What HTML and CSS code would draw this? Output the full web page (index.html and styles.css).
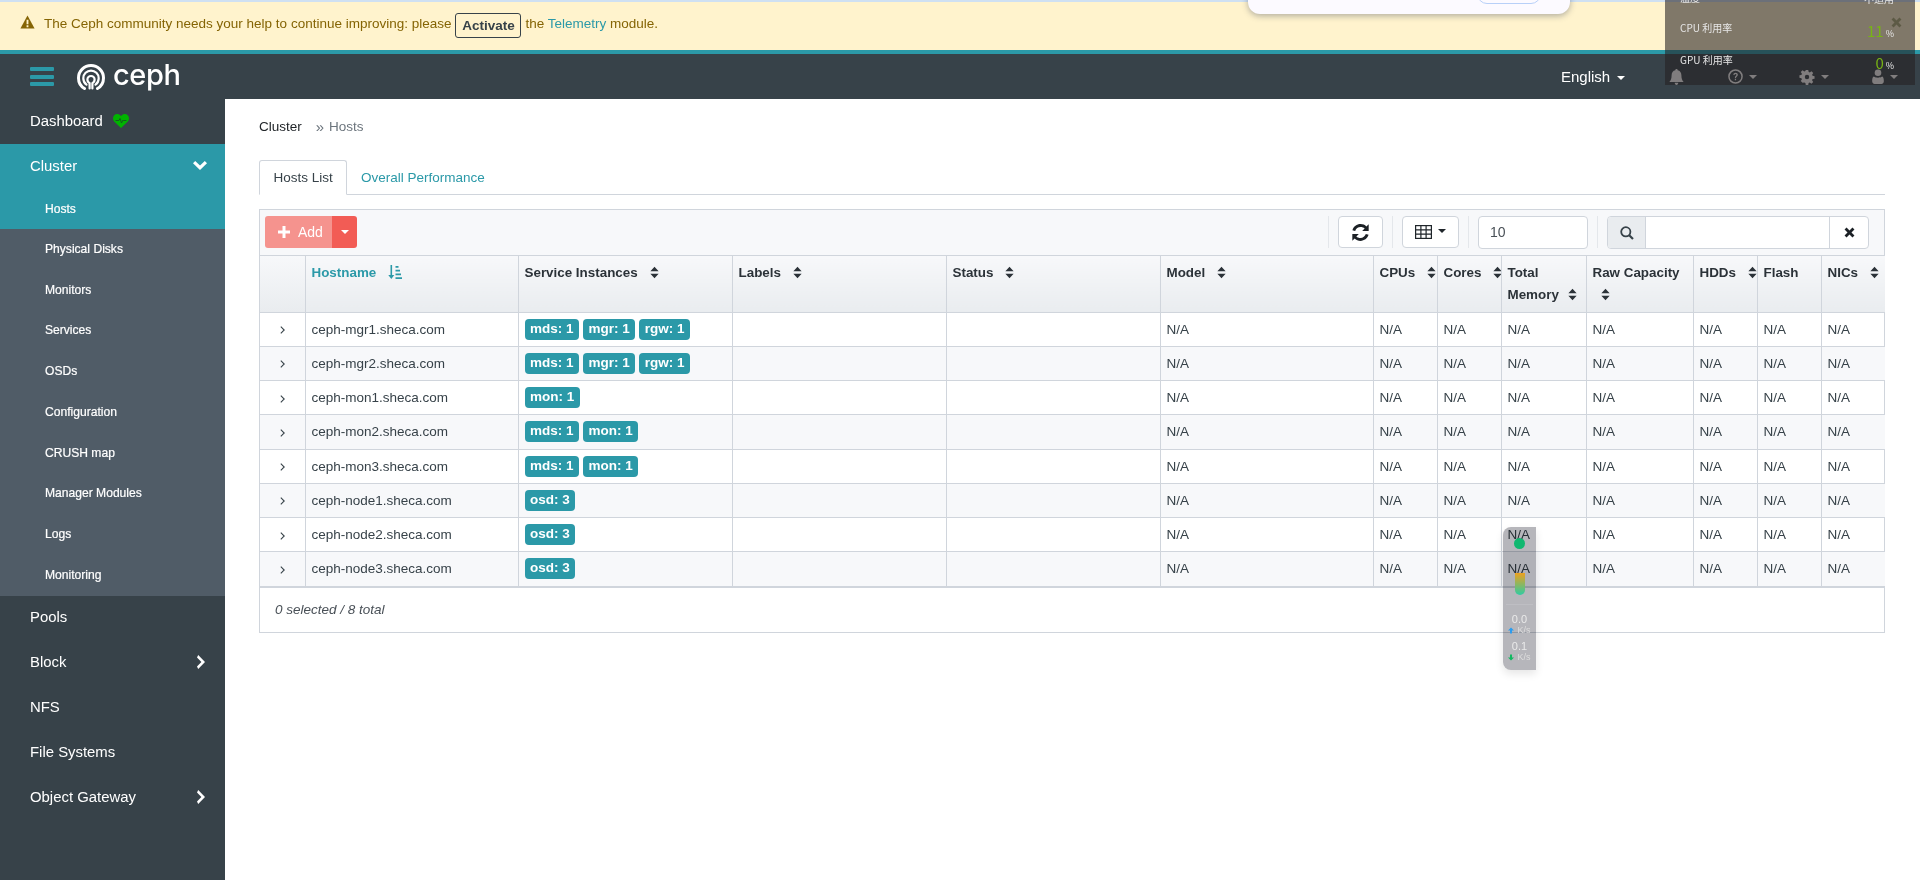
FILE: index.html
```html
<!DOCTYPE html>
<html lang="en">
<head>
<meta charset="utf-8">
<title>Ceph Hosts</title>
<link rel="stylesheet" href="styles.css">
</head>
<body>
<svg class="defs" width="0" height="0">
  <symbol id="sort" viewBox="0 0 10 14"><path d="M5 0.5 9.6 5.6H0.4zM5 13.5 0.4 8.4H9.6z"/></symbol>
  <symbol id="chev" viewBox="0 0 8 14"><path d="M1.2 0 8 7 1.2 14 0 11.6 4.4 7 0 2.4z"/></symbol>
  <symbol id="exp" viewBox="0 0 5 8"><path d="M.8.6 4.200 4 .8 7.400" fill="none" stroke="#374249" stroke-width="1.100"/></symbol>
</svg>
<div class="page">
  <div class="banner">
    <svg class="warn" viewBox="0 0 16 15"><path d="M8 0.5 15.6 14.5H0.4z" fill="#856404"/><path d="M7 5h2v5H7zM7 11h2v2H7z" fill="#fff3cd"/></svg>
    <span>The Ceph community needs your help to continue improving: please</span>
    <button class="activate">Activate</button>
    <span>the <a class="link">Telemetry</a> module.</span>
  </div>
  <header class="navbar">
    <div class="burger"><i></i><i></i><i></i></div>
    <svg class="logo" viewBox="0 0 28 26" fill="none" stroke="#fff" stroke-linecap="round">
      <path d="M7.500 24.500C3.800 22.400 1.500 18.500 1.500 14 1.500 7 7.200 1.500 14 1.500S26.500 7 26.500 14c0 4.500-2.300 8.400-6 10.500" stroke-width="3"/>
      <path d="M9.500 20.600C7.500 19.200 6.300 16.800 6.300 14.200 6.300 10 9.800 6.600 14 6.600s7.700 3.400 7.700 7.600c0 2.600-1.200 5-3.200 6.400" stroke-width="2.200"/>
      <path d="M12.600 24.500V19.200C11.200 18.600 10.400 17.200 10.400 15.600 10.400 13.600 12 12 14 12s3.600 1.600 3.600 3.600c0 1.600-.8 3-2.200 3.600v5.300" stroke-width="2.200"/>
    </svg>
    <span class="brand">ceph</span>
    <div class="nav-right">
      <span class="lang">English <i class="caret"></i></span>
      <svg class="nav-icon bell" viewBox="0 0 16 18"><path d="M8 0c1 0 1.400.7 1.300 1.500C12 2 13.500 4.300 13.500 7c0 4 .9 5.700 2.500 7.500H0C1.600 12.700 2.500 11 2.500 7c0-2.700 1.500-5 4.200-5.500C6.600.7 7 0 8 0zM6 15.500h4c0 1.400-.9 2.500-2 2.500s-2-1.100-2-2.500z"/></svg>
      <span class="nav-item help"><svg class="nav-icon" viewBox="0 0 16 16"><circle cx="8" cy="8" r="7" fill="none" stroke="currentColor" stroke-width="1.600"/><path d="M5.600 6.200C5.800 4.800 6.800 4 8.100 4c1.400 0 2.400.9 2.400 2.100 0 1.900-2 1.900-2 3.500H7.300C7.300 7.400 9 7.300 9 6.200 9 5.700 8.600 5.300 8 5.300S7 5.700 6.900 6.400zM7.300 10.500h1.300V12H7.300z"/></svg><i class="caret"></i></span>
      <span class="nav-item gear"><svg class="nav-icon" viewBox="-1 -1 18 18"><path fill-rule="evenodd" d="M6.600 0h2.800l.4 2.200 1.300.6L13 1.500l2 2-1.300 1.900.6 1.300 2.200.4v2.800l-2.200.4-.6 1.300 1.300 1.900-2 2-1.900-1.300-1.300.6-.4 2.200H6.600l-.4-2.200-1.300-.6L3 14.500l-2-2 1.300-1.900-.6-1.300L-.5 8.900V6.100l2.200-.4.6-1.300L1 2.500l2-2 1.900 1.300 1.300-.6zM8 5.500a2.500 2.500 0 1 0 0 5 2.500 2.500 0 0 0 0-5z"/></svg><i class="caret"></i></span>
      <span class="nav-item user"><svg class="nav-icon" viewBox="0 0 14 18"><circle cx="7" cy="4.500" r="4"/><path d="M2 9c1.400 1 3 1.400 5 1.400S10.600 10 12 9c1.400.6 2 2.500 2 5.500 0 2-1 3.500-3 3.500H3c-2 0-3-1.500-3-3.500C0 11.500.6 9.600 2 9z"/></svg><i class="caret"></i></span>
    </div>
  </header>
  <div class="body">
    <nav class="sidebar">
      <a class="item">Dashboard
        <svg class="heart" viewBox="0 0 16 14"><path d="M8 14 1.200 7.400C-.4 5.600-.4 2.800 1.200 1.200 2.900-.4 5.500-.4 7.200 1.200L8 2l.8-.8c1.700-1.600 4.300-1.600 6 0 1.600 1.600 1.600 4.400 0 6.200z" fill="#00b300"/><path d="M2.500 6.500H6l1-2 1.500 4.500L10 6l.5.500h3" fill="none" stroke="#14571f" stroke-width=".9"/></svg>
      </a>
      <div class="active-group">
        <a class="item">Cluster
          <svg class="chev-down" viewBox="0 0 14 9"><path d="M0 2.200 2.200 0 7 4.600 11.800 0 14 2.200 7 9z"/></svg>
        </a>
        <a class="sub">Hosts</a>
      </div>
      <div class="subs">
        <a class="sub">Physical Disks</a>
        <a class="sub">Monitors</a>
        <a class="sub">Services</a>
        <a class="sub">OSDs</a>
        <a class="sub">Configuration</a>
        <a class="sub">CRUSH map</a>
        <a class="sub">Manager Modules</a>
        <a class="sub">Logs</a>
        <a class="sub">Monitoring</a>
      </div>
      <a class="item">Pools</a>
      <a class="item">Block <svg class="chev-right"><use href="#chev"/></svg></a>
      <a class="item">NFS</a>
      <a class="item">File Systems</a>
      <a class="item">Object Gateway <svg class="chev-right"><use href="#chev"/></svg></a>
    </nav>
    <main class="main">
      <div class="crumbs"><span class="crumb-first">Cluster</span><span class="crumb-sep">»</span><span class="crumb-last">Hosts</span></div>
      <div class="tabs">
        <a class="tab active">Hosts List</a>
        <a class="tab">Overall Performance</a>
      </div>
      <section class="panel">
        <div class="toolbar">
          <div class="add-group">
            <span class="add"><svg class="plus" viewBox="0 0 12 12"><path d="M4.500 0h3v4.500H12v3H7.500V12h-3V7.500H0v-3h4.500z"/></svg>Add</span>
            <span class="add-caret"><i class="caret"></i></span>
          </div>
          <div class="tools">
            <i class="sep"></i>
            <button class="tool refresh"><svg viewBox="0 0 16 16"><path d="M13.500 2.300 15.700.3v6.200H9.600l2.300-2.300C11 3.300 9.600 2.800 8 2.800 5.700 2.800 3.700 4.300 3 6.500L.4 5.800C1.500 2.400 4.500.1 8 .1c2.200 0 4.100.8 5.500 2.200zM2.500 13.700.3 15.700V9.500h6.100L4.100 11.800c.9.900 2.300 1.400 3.900 1.400 2.300 0 4.300-1.500 5-3.700l2.600.7C14.500 13.600 11.500 15.900 8 15.900c-2.200 0-4.100-.8-5.500-2.200z"/></svg></button>
            <i class="sep"></i>
            <button class="tool cols"><svg viewBox="0 0 17 14" fill="none" stroke="#1f252a" stroke-width="1.200"><rect x=".6" y=".6" width="15.800" height="12.800"/><path d="M.6 4.800h15.800M.6 9.100h15.800M5.900.6v12.800M11.100.6v12.800"/></svg><i class="caret dark"></i></button>
            <i class="sep"></i>
            <div class="limit">10</div>
            <i class="sep"></i>
            <div class="search">
              <span class="addon"><svg viewBox="0 0 14 14" fill="none" stroke="#374249" stroke-width="1.800"><circle cx="5.800" cy="5.800" r="4.600"/><path d="M9.200 9.200 13 13" stroke-width="2.200"/></svg></span>
              <span class="field"></span>
              <span class="clear"><svg viewBox="0 0 10 10"><path d="M2.300.5 5 3.200 7.700.5 9.500 2.300 6.800 5l2.700 2.700-1.800 1.800L5 6.800 2.300 9.500.5 7.700 3.200 5 .5 2.300z"/></svg></span>
            </div>
          </div>
        </div>
        <table class="grid">
          <colgroup>
            <col class="c-exp"><col class="c-host"><col class="c-svc"><col class="c-lab"><col class="c-sta"><col class="c-mod">
            <col class="c-n"><col class="c-n"><col class="c-mem"><col class="c-raw"><col class="c-n"><col class="c-n"><col class="c-nic">
          </colgroup>
          <thead>
            <tr>
              <th></th>
              <th class="sorted">Hostname<svg class="sort-asc" viewBox="0 0 14 14"><path d="M2.500 0h1.600v10H6.300L3.300 14 .3 10h2.200zM7.500 1h3v1.700h-3zM7.500 4.800h4.500v1.700H7.500zM7.500 8.600H13v1.700H7.500zM7.500 12.300H14V14H7.500z"/></svg></th>
              <th>Service Instances<svg class="sort"><use href="#sort"/></svg></th>
              <th>Labels<svg class="sort"><use href="#sort"/></svg></th>
              <th>Status<svg class="sort"><use href="#sort"/></svg></th>
              <th>Model<svg class="sort"><use href="#sort"/></svg></th>
              <th>CPUs<svg class="sort"><use href="#sort"/></svg></th>
              <th>Cores<svg class="sort"><use href="#sort"/></svg></th>
              <th class="wrap">Total <span class="keep">Memory<svg class="sort"><use href="#sort"/></svg></span></th>
              <th class="wrap">Raw Capacity <svg class="sort solo"><use href="#sort"/></svg></th>
              <th>HDDs<svg class="sort"><use href="#sort"/></svg></th>
              <th>Flash</th>
              <th>NICs<svg class="sort"><use href="#sort"/></svg></th>
            </tr>
          </thead>
          <tbody>
            <tr><td class="exp"><svg><use href="#exp"/></svg></td><td>ceph-mgr1.sheca.com</td><td><span class="badge">mds: 1</span><span class="badge">mgr: 1</span><span class="badge">rgw: 1</span></td><td></td><td></td><td>N/A</td><td>N/A</td><td>N/A</td><td>N/A</td><td>N/A</td><td>N/A</td><td>N/A</td><td>N/A</td></tr>
            <tr><td class="exp"><svg><use href="#exp"/></svg></td><td>ceph-mgr2.sheca.com</td><td><span class="badge">mds: 1</span><span class="badge">mgr: 1</span><span class="badge">rgw: 1</span></td><td></td><td></td><td>N/A</td><td>N/A</td><td>N/A</td><td>N/A</td><td>N/A</td><td>N/A</td><td>N/A</td><td>N/A</td></tr>
            <tr><td class="exp"><svg><use href="#exp"/></svg></td><td>ceph-mon1.sheca.com</td><td><span class="badge">mon: 1</span></td><td></td><td></td><td>N/A</td><td>N/A</td><td>N/A</td><td>N/A</td><td>N/A</td><td>N/A</td><td>N/A</td><td>N/A</td></tr>
            <tr><td class="exp"><svg><use href="#exp"/></svg></td><td>ceph-mon2.sheca.com</td><td><span class="badge">mds: 1</span><span class="badge">mon: 1</span></td><td></td><td></td><td>N/A</td><td>N/A</td><td>N/A</td><td>N/A</td><td>N/A</td><td>N/A</td><td>N/A</td><td>N/A</td></tr>
            <tr><td class="exp"><svg><use href="#exp"/></svg></td><td>ceph-mon3.sheca.com</td><td><span class="badge">mds: 1</span><span class="badge">mon: 1</span></td><td></td><td></td><td>N/A</td><td>N/A</td><td>N/A</td><td>N/A</td><td>N/A</td><td>N/A</td><td>N/A</td><td>N/A</td></tr>
            <tr><td class="exp"><svg><use href="#exp"/></svg></td><td>ceph-node1.sheca.com</td><td><span class="badge">osd: 3</span></td><td></td><td></td><td>N/A</td><td>N/A</td><td>N/A</td><td>N/A</td><td>N/A</td><td>N/A</td><td>N/A</td><td>N/A</td></tr>
            <tr><td class="exp"><svg><use href="#exp"/></svg></td><td>ceph-node2.sheca.com</td><td><span class="badge">osd: 3</span></td><td></td><td></td><td>N/A</td><td>N/A</td><td>N/A</td><td>N/A</td><td>N/A</td><td>N/A</td><td>N/A</td><td>N/A</td></tr>
            <tr><td class="exp"><svg><use href="#exp"/></svg></td><td>ceph-node3.sheca.com</td><td><span class="badge">osd: 3</span></td><td></td><td></td><td>N/A</td><td>N/A</td><td>N/A</td><td>N/A</td><td>N/A</td><td>N/A</td><td>N/A</td><td>N/A</td></tr>
          </tbody>
        </table>
        <div class="panel-foot">0 selected / 8 total</div>
      </section>
    </main>
  </div>

  <div class="popup"><span class="popup-btn"></span></div>

  <aside class="monitor">
    <div class="mon-row mon-clip"><span class="mon-label">温度</span><span class="mon-na">不适用</span></div>
    <div class="mon-row mon-cpu"><span class="mon-label">CPU 利用率</span><span class="mon-val">11<small>%</small></span></div>
    <div class="mon-row mon-gpu"><span class="mon-label">GPU 利用率</span><span class="mon-val">0<small>%</small></span></div>
    <svg class="mon-x" viewBox="0 0 10 10"><path d="M2.300.5 5 3.200 7.700.5 9.500 2.300 6.800 5l2.700 2.700-1.800 1.800L5 6.800 2.300 9.500.5 7.700 3.200 5 .5 2.300z"/></svg>
  </aside>

  <aside class="widget">
    <i class="dot"></i>
    <i class="gauge"></i>
    <i class="rule"></i>
    <span class="speed">0.0</span>
    <span class="unit"><svg class="arrow up" viewBox="0 0 8 8"><path d="M4 0 8 4H5.300V8H2.700V4H0z"/></svg>K/s</span>
    <span class="speed second">0.1</span>
    <span class="unit"><svg class="arrow down" viewBox="0 0 8 8"><path d="M4 8 8 4H5.300V0H2.700V4H0z"/></svg>K/s</span>
  </aside>
</div>
</body>
</html>
```
FILE: styles.css
```css
* { box-sizing: border-box; }
html, body { margin: 0; padding: 0; }
body { font-family: "Liberation Sans", Arial, sans-serif; font-size: 13.5px; color: #374249; background: #fff; }
.defs { position: absolute; }
.page { position: relative; width: 1920px; height: 880px; overflow: hidden; display: flex; flex-direction: column; }

/* banner */
.banner { height: 54px; padding: 11px 0 0 20px; display: flex; align-items: flex-start; background: #fff3cd; border-top: 2px solid #cfe0f2; border-bottom: 4px solid #2b99a8; color: #856404; line-height: 21px; }
.warn { width: 15px; height: 14px; margin: 2px 9px 0 0; flex: none; }
.activate { height: 25px; width: 66px; margin: 0 4px; padding: 0; background: transparent; border: 1px solid #374249; border-radius: 3px; font: bold 13.5px "Liberation Sans", Arial, sans-serif; color: #374249; }
.link { color: #2b99a8; }

/* navbar */
.navbar { height: 45px; background: #374249; display: flex; align-items: center; flex: none; }
.burger { width: 24px; height: 19px; margin-left: 30px; display: flex; flex-direction: column; justify-content: space-between; }
.burger i { display: block; height: 4px; background: #2b99a8; border-radius: 1px; }
.logo { width: 28px; height: 26px; margin-left: 23px; }
.brand { font-family: Inter, sans-serif; font-size: 29px; font-weight: 500; line-height: 32px; color: #fff; margin: -3px 0 0 8px; letter-spacing: -.4px; }
.nav-right { margin-left: auto; display: flex; align-items: center; color: #fff; }
.lang { font-size: 15px; width: 108px; }
.caret { display: inline-block; width: 0; height: 0; border: 4px solid transparent; border-top-color: #fff; border-bottom: 0; vertical-align: 2px; margin-left: 3px; }
.caret.dark { border-top-color: #1f252a; }
.nav-icon { fill: currentColor; color: #fff; }
.nav-item { display: flex; align-items: center; color: #fff; }
.nav-item .caret { margin-left: 6px; }
.bell { width: 15px; height: 16px; margin: 0 44px 0 0; }
.help { width: 71px; }
.help .nav-icon { width: 15px; height: 15px; }
.gear { width: 73px; }
.gear .nav-icon { width: 16px; height: 16px; }
.user { width: 48px; }
.user .nav-icon { width: 12px; height: 15px; }

/* body */
.body { flex: 1; display: flex; min-height: 0; }
.sidebar { width: 225px; flex: none; background: #374249; display: flex; flex-direction: column; }
.item { height: 45px; flex: none; padding: 0 0 2px 30px; display: flex; align-items: center; color: #fff; font-size: 14.9px; }
.heart { width: 16px; height: 14px; margin-left: 10px; }
.active-group { background: #2b99a8; }
.subs { background: #505c67; }
.sub { display: block; height: 40.75px; padding-left: 45px; line-height: 40px; color: #fff; font-size: 12.1px; -webkit-text-stroke: .2px #fff; }
.active-group .sub { height: 39.75px; }
.chev-down { width: 14px; height: 9px; fill: #fff; margin-left: auto; margin-right: 18px; }
.chev-right { width: 8px; height: 14px; fill: #fff; margin-left: auto; margin-right: 20px; }

/* main */
.main { flex: 1; min-width: 0; padding: 0 35px 0 34px; }
.crumbs { height: 61px; padding-top: 18px; line-height: 20px; display: flex; }
.crumb-first { color: #212529; }
.crumb-sep { color: #6c757d; margin-left: 14px; font-size: 15px; line-height: 19px; }
.crumb-last { color: #6c757d; margin-left: 5px; }
.tabs { display: flex; height: 35px; border-bottom: 1px solid #d0d5dc; }
.tab { padding: 8px 15px 0 14px; color: #2b99a8; height: 35px; line-height: 20px; }
.tab.active { color: #374249; background: #fff; border: 1px solid #d0d5dc; border-bottom-color: #fff; border-radius: 3px 3px 0 0; padding: 7px 0 0 13.500px; width: 88px; white-space: nowrap; }
.panel { margin-top: 14px; border: 1px solid #d0d5dc; }
.toolbar { height: 46px; background: #f7f8fa; padding: 6px 15px 0 5px; display: flex; justify-content: space-between; border-bottom: 1px solid #d0d5dc; }
.add-group { display: flex; height: 32px; color: #fff; border-radius: 3px; overflow: hidden; }
.add { width: 67px; background: #f5938e; display: flex; align-items: center; padding-left: 13px; font-size: 14px; }
.plus { width: 12px; height: 12px; fill: #fff; margin-right: 8px; }
.add-caret { width: 25px; background: #f25c55; display: flex; align-items: center; justify-content: center; }
.add-caret .caret { margin: 0; }
.tools { display: flex; align-items: flex-start; }
.sep { width: 1px; height: 32px; background: #e4e7eb; margin: 0 9px; }
.tool { height: 32px; padding: 0; background: #fff; border: 1px solid #d0d5dc; border-radius: 4px; display: flex; align-items: center; justify-content: center; }
.refresh { width: 45px; }
.refresh svg { width: 17px; height: 17px; fill: #1c2126; }
.cols { width: 57px; }
.cols svg { width: 17px; height: 14px; }
.cols .caret { margin-left: 6px; margin-bottom: 3px; }
.limit { width: 110px; height: 33px; background: #fff; border: 1px solid #d0d5dc; border-radius: 4px; padding-left: 11px; line-height: 31px; color: #495057; font-size: 14px; }
.search { width: 262px; height: 33px; display: flex; background: #fff; border: 1px solid #d0d5dc; border-radius: 4px; overflow: hidden; }
.addon { width: 38px; background: #e9ecef; border-right: 1px solid #d0d5dc; display: flex; align-items: center; justify-content: center; }
.addon svg { width: 14px; height: 14px; }
.field { flex: 1; }
.clear { width: 39px; border-left: 1px solid #d0d5dc; display: flex; align-items: center; justify-content: center; }
.clear svg { width: 11px; height: 11px; fill: #1c2126; }

/* table */
.grid { width: 100%; table-layout: fixed; border-collapse: collapse; }
.c-exp { width: 45px; } .c-host { width: 213px; } .c-svc { width: 214px; } .c-lab { width: 214px; } .c-sta { width: 214px; } .c-mod { width: 213px; }
.c-n { width: 64px; } .c-mem { width: 85px; } .c-raw { width: 107px; } .c-nic { width: 64px; }
.grid th { height: 56px; padding: 6px 0 0 6px; vertical-align: top; text-align: left; font-size: 13.4px; line-height: 22px; font-weight: bold; color: #2b3238; background: linear-gradient(#f7f8fa, #e9ecef); border: 1px solid #d0d5dc; border-top: 0; white-space: nowrap; overflow: hidden; }
.grid th.wrap { white-space: normal; padding-right: 4px; }
.keep { white-space: nowrap; }
.keep .sort { margin-left: 9px; }
.grid th:first-child { border-left: 0; }
.grid th:last-child { border-right: 0; }
.grid th.sorted { color: #2b99a8; }
.sort { width: 9px; height: 13px; margin-left: 12px; vertical-align: -2px; fill: #2b3238; }
.sort.solo { margin-left: 8px; }
.sort-asc { width: 14px; height: 14px; margin-left: 12px; vertical-align: -2px; fill: #2b99a8; }
.grid td { height: 34.25px; padding: 0 6px; border: 1px solid #d0d5dc; color: #374249; white-space: nowrap; overflow: hidden; }
.grid td:first-child { border-left: 0; }
.grid td:last-child { border-right: 0; }
.grid tbody tr:nth-child(even) td { background: #f7f8fa; }
.grid td.exp { text-align: center; padding: 0; }
.exp svg { display: inline-block; width: 5px; height: 8px; vertical-align: middle; }
.badge { display: inline-block; height: 21px; margin-right: 4px; padding: 0 5.500px; background: #2b99a8; border-radius: 4px; color: #fff; font-weight: bold; font-size: 13.5px; line-height: 20px; vertical-align: middle; }
.panel-foot { height: 45px; padding: 0 15px; line-height: 44px; font-size: 13.5px; font-style: italic; color: #495057; border-top: 1px solid #d0d5dc; }

/* floating overlays */
.popup { position: absolute; left: 1248px; top: -20px; width: 322px; height: 34px; background: #fcfaff; border-radius: 12px; box-shadow: 0 2px 6px rgba(60, 70, 90, .4); }
.popup-btn { position: absolute; left: 229px; bottom: 10px; width: 64px; height: 20px; border: 1px solid #b8d0f8; border-radius: 10px; }
.monitor { position: absolute; left: 1665px; top: 0; width: 250px; height: 85px; background: rgba(38, 33, 34, .585); overflow: hidden; color: #e6e6e6; font-family: "Noto Sans CJK SC", "Liberation Sans", sans-serif; font-size: 10px; }
.mon-row { position: absolute; left: 15px; right: 21px; display: flex; justify-content: space-between; }
.mon-clip { top: -9px; }
.mon-cpu { top: 21px; }
.mon-gpu { top: 53px; }
.mon-label { line-height: 14px; }
.mon-val { color: #78b414; font-size: 15px; line-height: 22px; margin-top: -1px; }
.mon-val small { color: #e6e6e6; font-size: 9px; margin-left: 2px; }
.mon-x { position: absolute; left: 226px; top: 17px; width: 11px; height: 11px; fill: #5d5a45; }
.widget { position: absolute; left: 1503px; top: 527px; width: 33px; height: 143px; border-radius: 8px 0 0 8px; box-shadow: 0 4px 8px rgba(0, 0, 0, .1); display: flex; flex-direction: column; align-items: center; color: #eee; }
.widget::before { content: ""; position: absolute; inset: 0; border-radius: inherit; background: #b6b6bb; mix-blend-mode: multiply; }
.widget > * { position: relative; }
.dot { width: 11px; height: 11px; margin-top: 11px; border-radius: 50%; background: #10b870; flex: none; }
.gauge { width: 10px; height: 22px; margin-top: 24px; border-radius: 0 0 5px 5px; background: linear-gradient(#eda01e, #2fcca2); flex: none; }
.rule { width: 27px; height: 1px; margin-top: 9px; background: rgba(255, 255, 255, .12); flex: none; }
.speed { margin-top: 8px; font-size: 11px; line-height: 12px; color: #eaeaea; }
.speed.second { margin-top: 5px; }
.unit { display: flex; align-items: center; font-size: 9px; line-height: 10px; color: #ddd; }
.arrow { width: 6px; height: 7px; margin-right: 3px; }
.arrow.up { fill: #2a9cf0; }
.arrow.down { fill: #10b860; }
```
